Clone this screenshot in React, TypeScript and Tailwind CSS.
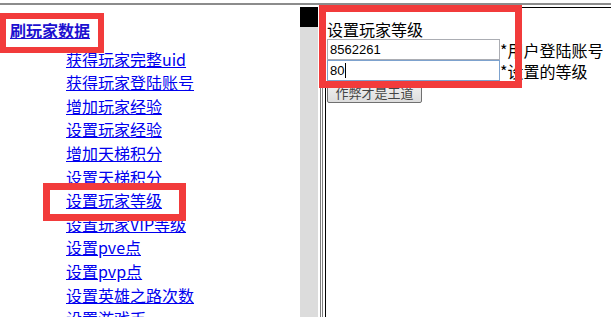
import type { ReactNode } from 'react';

const links = [
  '获得玩家完整uid',
  '获得玩家登陆账号',
  '增加玩家经验',
  '设置玩家经验',
  '增加天梯积分',
  '设置天梯积分',
  '设置玩家等级',
  '设置玩家VIP等级',
  '设置pve点',
  '设置pvp点',
  '设置英雄之路次数',
  '设置游戏币',
];

const cjk = "font-['SimSun','Noto_Sans_CJK_SC',sans-serif]";

function Mark({ className }: { className: string }) {
  // red annotation rectangle drawn over the screenshot
  return <div className={`pointer-events-none absolute border-[#f23b3b] ${className}`} />;
}

function Field({ value, focused, label }: { value: string; focused?: boolean; label: ReactNode }) {
  return (
    <div className="flex h-[21px] items-end">
      <div
        className={`flex h-[21px] w-[173px] items-center border bg-white px-[2px] font-['Liberation_Sans',sans-serif] text-[13px] text-black ${
          focused ? 'border-[#7da2ce]' : 'border-[#abadb3]'
        }`}
      >
        {value}
        {focused && <span className="ml-px h-[15px] w-px bg-black" />}
      </div>
      <span className={`${cjk} text-[16px] leading-[19px] text-black`}>{label}</span>
    </div>
  );
}

export default function App() {
  return (
    <div className="relative h-[317px] w-[611px] overflow-hidden bg-white">
      <div className="h-[3px]" />
      <div className="h-[2px] bg-[#8c8c8c]" />

      <div className="flex h-[312px]">
        {/* left frame */}
        <div className="flex w-[300px] flex-col">
          <div className="h-[2px]" />
          <div className="h-px bg-black" />
          <div className="h-[2px]" />
          <div className="h-px bg-[#a0a0a0]" />
          <div className={`${cjk} mt-[14px] text-[16px] leading-[23.6px]`}>
            <a href="#" className="ml-[10px] font-bold text-[#1c10d0] underline">
              刷玩家数据
            </a>
            <div className="mt-[5px] flex flex-col pl-[66px]">
              {links.map((l) => (
                <a key={l} href="#" className="w-fit whitespace-nowrap text-[#0000ee] underline">
                  {l}
                </a>
              ))}
            </div>
          </div>
        </div>

        {/* scrollbar */}
        <div className="flex w-[18px] flex-col">
          <div className="h-[2px]" />
          <div className="h-[20px] bg-black" />
          <div className="flex-1 bg-[#dcdcdc]" />
        </div>

        {/* frameset border */}
        <div className="w-[2px]" />
        <div className="w-px bg-[#808080]" />
        <div className="w-px" />
        <div className="w-px bg-[#808080]" />
        <div className="w-[2px]" />
        <div className="w-px bg-black" />

        {/* right frame */}
        <div className="flex flex-1 flex-col">
          <div className="h-[2px]" />
          <div className="h-px bg-black" />
          <div className="flex flex-col pl-px pt-[12px]">
            <div className={`${cjk} text-[16px] leading-[19px] text-black`}>设置玩家等级</div>
            <Field value="8562261" label="*用户登陆账号" />
            <Field value="80" focused label="*设置的等级" />
            <button className="mt-[1px] h-[21px] w-[95px] rounded-[2px] border border-[#707070] bg-gradient-to-b from-[#f2f2f2] to-[#dddddd] font-['Noto_Sans_CJK_SC',sans-serif] text-[13px] leading-none text-[#444]">
              作弊才是王道
            </button>
          </div>
        </div>
      </div>

      <Mark className="left-0 top-[13px] h-[40px] w-[104px] border-[6px]" />
      <Mark className="left-[43px] top-[183px] h-[38px] w-[143px] border-[7px]" />
      <Mark className="left-[319px] top-[5px] h-[83px] w-[203px] border-[7px]" />
    </div>
  );
}
